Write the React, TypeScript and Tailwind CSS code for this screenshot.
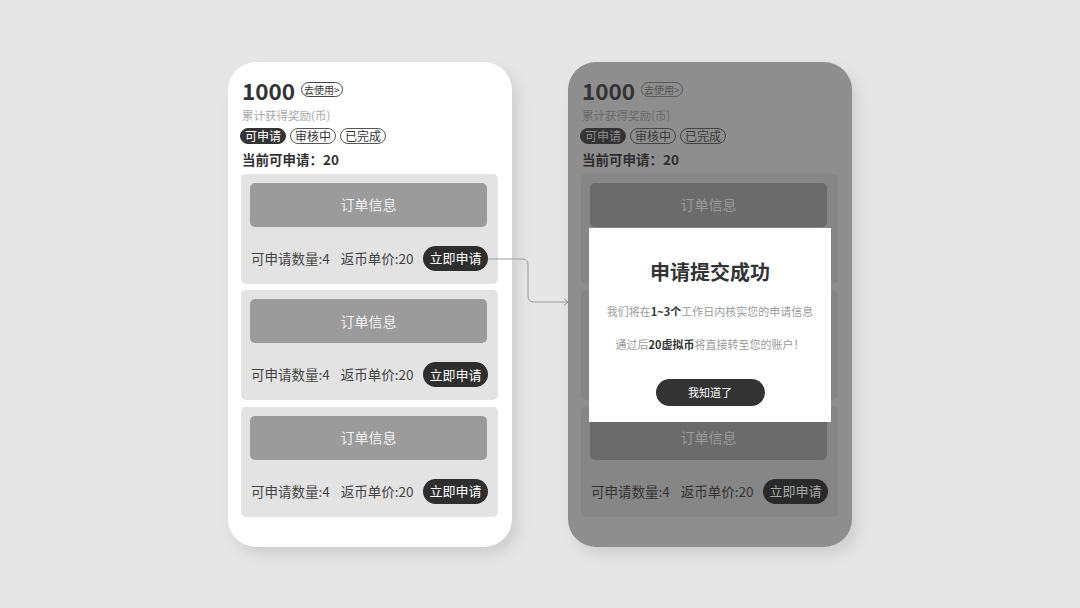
import React from "react";

const FONT = { fontFamily: '"Noto Sans CJK SC", "Noto Sans", sans-serif' };

type Theme = {
  card: string;
  num: string;
  usePill: string;
  sub: string;
  activeTab: string;
  tab: string;
  current: string;
  order: string;
  inner: string;
  row: string;
  btn: string;
};

const light: Theme = {
  card: "bg-white shadow-[6px_8px_14px_rgba(0,0,0,0.10)]",
  num: "text-[#333333]",
  usePill: "border-[#444444] text-[#333333]",
  sub: "text-[#a8a8a8]",
  activeTab: "bg-[#333333] text-white border-[#333333]",
  tab: "border-[#555555] text-[#333333]",
  current: "text-[#333333]",
  order: "bg-[#e3e3e3]",
  inner: "bg-[#9b9b9b] text-[#f2f2f2]",
  row: "text-[#444444]",
  btn: "bg-[#2e2e2e] text-white",
};

const dark: Theme = {
  card: "bg-[#8e8e8e] shadow-[6px_8px_14px_rgba(0,0,0,0.10)]",
  num: "text-[#333333]",
  usePill: "border-[#5a5a5a] text-[#555555]",
  sub: "text-[#6a6a6a]",
  activeTab: "bg-[#333333] text-[#8a8a8a] border-[#333333]",
  tab: "border-[#444444] text-[#3a3a3a]",
  current: "text-[#2e2e2e]",
  order: "bg-[#868686]",
  inner: "bg-[#6b6b6b] text-[#9a9a9a]",
  row: "text-[#333333]",
  btn: "bg-[#2a2a2a] text-[#a8a8a8]",
};

function OrderCard({ t }: { t: Theme }) {
  return (
    <div className={`h-[110px] rounded-[5px] pt-[9px] pl-[9px] pr-[11px] ${t.order}`}>
      <div className={`h-[44px] rounded-[5px] flex items-center justify-center text-[14px] ${t.inner}`}>
        订单信息
      </div>
      <div className="mt-[19px] flex items-center h-[25px]">
        <span className={`ml-[1px] text-[13.5px] ${t.row}`}>可申请数量:4</span>
        <span className={`ml-[11px] text-[13.5px] ${t.row}`}>返币单价:20</span>
        <span
          className={`ml-auto -mr-[1px] h-[25px] w-[65px] rounded-full flex items-center justify-center text-[13px] ${t.btn}`}
        >
          立即申请
        </span>
      </div>
    </div>
  );
}

function Phone({ t, children }: { t: Theme; children?: React.ReactNode }) {
  return (
    <div className={`relative w-[284px] h-[485px] rounded-[28px] pt-[14px] pl-[13px] pr-[14px] ${t.card}`}>
      <div className="flex items-center h-[28px] pl-[1px]">
        <span className={`text-[22.5px] leading-[28px] font-bold ${t.num}`}>1000</span>
        <span
          className={`ml-[6px] h-[15px] px-[2px] rounded-full border flex items-center text-[10px] leading-none ${t.usePill}`}
        >
          去使用&gt;
        </span>
      </div>
      <div className={`mt-[3px] pl-[1px] text-[11.5px] leading-[16px] ${t.sub}`}>累计获得奖励(币)</div>
      <div className="mt-[5px] flex gap-[4px] -ml-[1px]">
        <span className={`h-[16px] px-[4px] rounded-full border flex items-center text-[12px] leading-none ${t.activeTab}`}>
          可申请
        </span>
        <span className={`h-[16px] px-[4px] rounded-full border flex items-center text-[12px] leading-none ${t.tab}`}>
          审核中
        </span>
        <span className={`h-[16px] px-[4px] rounded-full border flex items-center text-[12px] leading-none ${t.tab}`}>
          已完成
        </span>
      </div>
      <div className={`mt-[5px] pl-[1px] text-[13.5px] leading-[20px] font-bold ${t.current}`}>当前可申请：20</div>
      <div className="mt-[5px] flex flex-col gap-[6.5px]">
        <OrderCard t={t} />
        <OrderCard t={t} />
        <OrderCard t={t} />
      </div>
      {children}
    </div>
  );
}

function Modal() {
  return (
    <div className="absolute left-[21px] top-[166px] w-[242px] h-[194px] bg-white flex flex-col items-center pt-[30px]">
      <div className="text-[20px] leading-[28px] font-bold text-[#333333]">申请提交成功</div>
      <div className="mt-[17px] text-[11px] leading-[16px] text-[#9a9a9a]">
        我们将在<span className="font-bold text-[#333333]">1~3个</span>工作日内核实您的申请信息
      </div>
      <div className="mt-[17px] text-[11px] leading-[16px] text-[#9a9a9a]">
        通过后<span className="font-bold text-[#333333]">20虚拟币</span>将直接转至您的账户！
      </div>
      <div className="mt-[27px] w-[109px] h-[27px] rounded-full bg-[#333333] text-white text-[11px] flex items-center justify-center">
        我知道了
      </div>
    </div>
  );
}

export default function App() {
  return (
    <div className="w-[1080px] h-[608px] bg-[#e6e6e6] flex items-center justify-center" style={FONT}>
      <div className="relative flex gap-[56px]">
        <Phone t={light} />
        <Phone t={dark}>
          <Modal />
        </Phone>
        <svg
          className="absolute left-[258px] top-[194px]"
          width="84"
          height="52"
          viewBox="0 0 84 52"
          fill="none"
        >
          <path
            d="M2 3 H36 Q42 3 42 9 V40 Q42 46 48 46 H82"
            stroke="#9a9a9a"
            strokeWidth="1"
          />
          <path d="M78 42.5 L82 46 L78 49.5" stroke="#9a9a9a" strokeWidth="1" />
        </svg>
      </div>
    </div>
  );
}
